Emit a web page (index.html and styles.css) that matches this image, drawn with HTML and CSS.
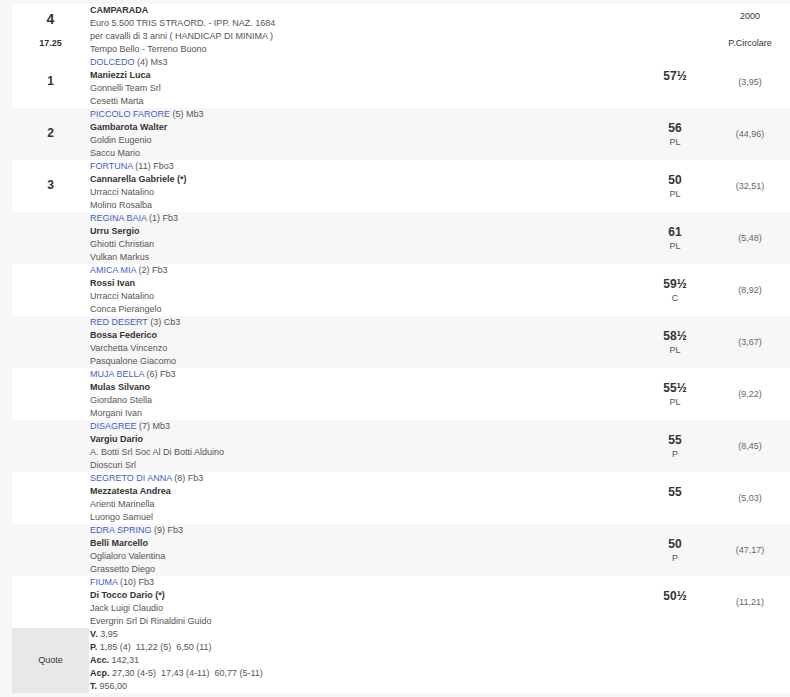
FILE: index.html
```html
<!DOCTYPE html>
<html>
<head>
<meta charset="utf-8">
<link rel="stylesheet" href="styles.css">
</head>
<body>
<table class="race">
  <colgroup>
    <col class="c-num"><col class="c-info"><col class="c-wt"><col class="c-odds">
  </colgroup>
  <tbody>
    <tr class="head">
      <td class="num gray"><div class="racenum">4</div><div class="time">17.25</div></td>
      <td class="info"><b>CAMPARADA</b><br>Euro 5.500 TRIS STRAORD. - IPP. NAZ. 1684<br>per cavalli di 3 anni ( HANDICAP DI MINIMA )<br>Tempo Bello - Terreno Buono</td>
      <td class="wt"></td>
      <td class="odds dist"><div>2000</div><div>P.Circolare</div></td>
    </tr>
    <tr class="w">
      <td class="num"><span class="pos">1</span></td>
      <td class="info"><a>DOLCEDO</a> (4) Ms3<br><b>Maniezzi Luca</b><br>Gonnelli Team Srl<br>Cesetti Marta</td>
      <td class="wt"><div class="kg">57½</div><div class="tag">&nbsp;</div></td>
      <td class="odds">(3,95)</td>
    </tr>
    <tr class="g">
      <td class="num"><span class="pos">2</span></td>
      <td class="info"><a>PICCOLO FARORE</a> (5) Mb3<br><b>Gambarota Walter</b><br>Goldin Eugenio<br>Saccu Mario</td>
      <td class="wt"><div class="kg">56</div><div class="tag">PL</div></td>
      <td class="odds">(44,96)</td>
    </tr>
    <tr class="w">
      <td class="num"><span class="pos">3</span></td>
      <td class="info"><a>FORTUNA</a> (11) Fbo3<br><b>Cannarella Gabriele (*)</b><br>Urracci Natalino<br>Molino Rosalba</td>
      <td class="wt"><div class="kg">50</div><div class="tag">PL</div></td>
      <td class="odds">(32,51)</td>
    </tr>
    <tr class="g">
      <td class="num"></td>
      <td class="info"><a>REGINA BAIA</a> (1) Fb3<br><b>Urru Sergio</b><br>Ghiotti Christian<br>Vulkan Markus</td>
      <td class="wt"><div class="kg">61</div><div class="tag">PL</div></td>
      <td class="odds">(5,48)</td>
    </tr>
    <tr class="w">
      <td class="num"></td>
      <td class="info"><a>AMICA MIA</a> (2) Fb3<br><b>Rossi Ivan</b><br>Urracci Natalino<br>Conca Pierangelo</td>
      <td class="wt"><div class="kg">59½</div><div class="tag">C</div></td>
      <td class="odds">(8,92)</td>
    </tr>
    <tr class="g">
      <td class="num"></td>
      <td class="info"><a>RED DESERT</a> (3) Cb3<br><b>Bossa Federico</b><br>Varchetta Vincenzo<br>Pasqualone Giacomo</td>
      <td class="wt"><div class="kg">58½</div><div class="tag">PL</div></td>
      <td class="odds">(3,67)</td>
    </tr>
    <tr class="w">
      <td class="num"></td>
      <td class="info"><a>MUJA BELLA</a> (6) Fb3<br><b>Mulas Silvano</b><br>Giordano Stella<br>Morgani Ivan</td>
      <td class="wt"><div class="kg">55½</div><div class="tag">PL</div></td>
      <td class="odds">(9,22)</td>
    </tr>
    <tr class="g">
      <td class="num"></td>
      <td class="info"><a>DISAGREE</a> (7) Mb3<br><b>Vargiu Dario</b><br>A. Botti Srl Soc Al Di Botti Alduino<br>Dioscuri Srl</td>
      <td class="wt"><div class="kg">55</div><div class="tag">P</div></td>
      <td class="odds">(8,45)</td>
    </tr>
    <tr class="w">
      <td class="num"></td>
      <td class="info"><a>SEGRETO DI ANNA</a> (8) Fb3<br><b>Mezzatesta Andrea</b><br>Arienti Marinella<br>Luongo Samuel</td>
      <td class="wt"><div class="kg">55</div><div class="tag">&nbsp;</div></td>
      <td class="odds">(5,03)</td>
    </tr>
    <tr class="g">
      <td class="num"></td>
      <td class="info"><a>EDRA SPRING</a> (9) Fb3<br><b>Belli Marcello</b><br>Oglialoro Valentina<br>Grassetto Diego</td>
      <td class="wt"><div class="kg">50</div><div class="tag">P</div></td>
      <td class="odds">(47,17)</td>
    </tr>
    <tr class="w">
      <td class="num"></td>
      <td class="info"><a>FIUMA</a> (10) Fb3<br><b>Di Tocco Dario (*)</b><br>Jack Luigi Claudio<br>Evergrin Srl Di Rinaldini Guido</td>
      <td class="wt"><div class="kg">50½</div><div class="tag">&nbsp;</div></td>
      <td class="odds">(11,21)</td>
    </tr>
    <tr class="w quote">
      <td class="num gray qlabel">Quote</td>
      <td class="info"><b>V.</b> 3,95<br><b>P.</b> 1,85 (4)&nbsp; 11,22 (5)&nbsp; 6,50 (11)<br><b>Acc.</b> 142,31<br><b>Acp.</b> 27,30 (4-5)&nbsp; 17,43 (4-11)&nbsp; 60,77 (5-11)<br><b>T.</b> 956,00</td>
      <td class="wt"></td>
      <td class="odds"></td>
    </tr>
  </tbody>
</table>
</body>
</html>
```
FILE: styles.css
```css
html, body {
  margin: 0;
  padding: 0;
  background: #f7f7f7;
}
body {
  padding: 4px 0 4px 12px;
  font-family: "Liberation Sans", Arial, sans-serif;
  font-size: 9px;
  line-height: 13px;
  color: #555;
}
.race {
  border-collapse: collapse;
  width: 778px;
  table-layout: fixed;
}
.c-num { width: 77px; }
.c-wt { width: 70px; }
.c-odds { width: 80px; }
td {
  padding: 0;
  vertical-align: middle;
}
tr.w td { background: #fff; }
tr.g td { background: #f7f7f7; }
tr.head td { background: #fff; }
td.gray, tr.w td.gray { background: #e8e8e8; }
td.num {
  text-align: center;
  color: #333;
}
.racenum {
  font-size: 14px;
  font-weight: bold;
  line-height: 18px;
  color: #333;
}
.time {
  font-weight: bold;
  margin-top: 9px;
  color: #333;
}
.pos {
  font-size: 12px;
  font-weight: bold;
  color: #333;
}
td.info {
  padding-left: 1px;
  white-space: nowrap;
}
td.info b { color: #333; }
td.info a {
  color: #3f5fcb;
  text-decoration: none;
}
td.wt {
  text-align: center;
  color: #333;
}
.kg {
  font-size: 12px;
  font-weight: bold;
  line-height: 16px;
}
.tag {
  font-size: 9px;
  line-height: 13px;
  color: #555;
}
td.odds {
  text-align: center;
  color: #666;
}
td.dist {
  color: #333;
}
td.dist div + div {
  margin-top: 14px;
}
.qlabel {
  color: #333;
}
```
